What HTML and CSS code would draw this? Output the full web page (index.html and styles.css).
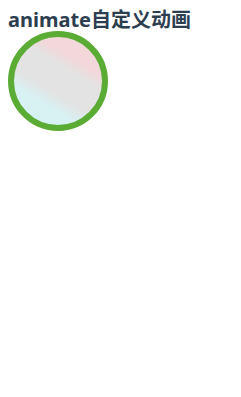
FILE: index.html
```html
<!DOCTYPE html>
<html lang="zh-CN">
<head>
    <meta charset="UTF-8">
    <meta name="viewport" content="width=device-width, initial-scale=1.0">
    <title>animate自定义动画</title>
    <link rel="stylesheet" href="styles.css">
</head>
<body>
    <h3 class="title">animate自定义动画</h3>
    <div class="ball"></div>
</body>
</html>
```

FILE: styles.css
```css
body {
    margin: 8px;
    background: #fff;
    font-family: "Noto Sans", "Noto Sans CJK SC", sans-serif;
    color: #2c3e50;
}

.title {
    margin: 0;
    font-size: 20px;
    line-height: 23px;
    font-weight: bold;
}

.ball {
    width: 88px;
    height: 88px;
    border: 6px solid #5aac35;
    border-radius: 50%;
    background: linear-gradient(31deg, #d5f3f5 0%, #d8f1f2 28%, #e3e3e3 40%, #e3e3e3 62%, #f2d8da 72%, #f3d8da 100%);
}
```
